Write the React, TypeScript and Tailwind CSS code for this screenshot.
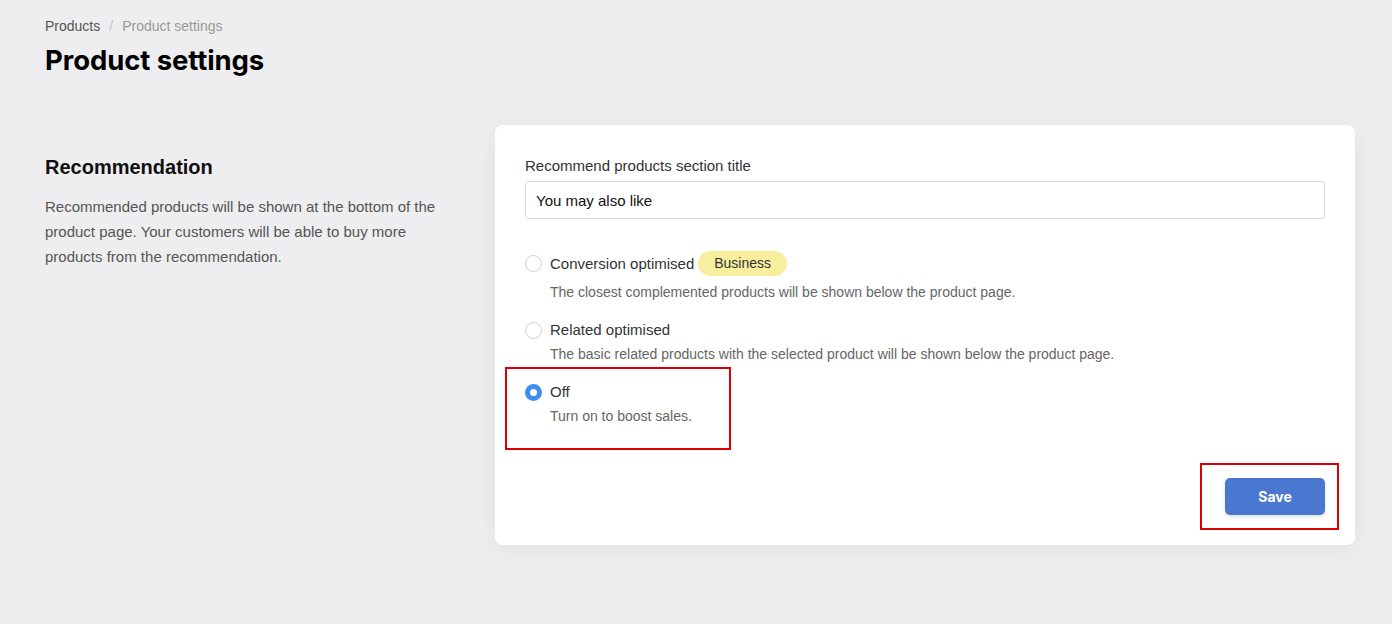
import React, { useState } from "react";

const options = [
  {
    id: "conversion",
    label: "Conversion optimised",
    badge: "Business",
    desc: "The closest complemented products will be shown below the product page.",
  },
  {
    id: "related",
    label: "Related optimised",
    desc: "The basic related products with the selected product will be shown below the product page.",
  },
  {
    id: "off",
    label: "Off",
    desc: "Turn on to boost sales.",
  },
];

export default function App() {
  const [selected, setSelected] = useState("off");

  return (
    <div className="min-h-screen bg-[#eeeef0] px-[45px] pt-[17px] pb-10 font-['Liberation_Sans',Arial,sans-serif]">
      {/* Header */}
      <nav className="flex items-center text-[14px] leading-[18px] text-[#999]">
        <span className="text-[#555]">Products</span>
        <span className="mx-[9px] text-[#c4c4c4]">/</span>
        <span>Product settings</span>
      </nav>
      <h1 className="mt-[8px] text-[27.5px] leading-[34px] font-bold text-black font-['Inter',sans-serif] tracking-[-0.1px]">
        Product settings
      </h1>

      <div className="mt-[48px] flex">
        {/* 설명 */}
        <section className="w-[450px] shrink-0 pt-[29px]">
          <h2 className="text-[20px] leading-[26px] font-bold text-[#111]">Recommendation</h2>
          <p className="mt-[14px] w-[405px] text-[15px] leading-[25px] text-[#555]">
            Recommended products will be shown at the bottom of the product page. Your customers will be able to buy more
            products from the recommendation.
          </p>
        </section>

        {/* Card */}
        <section className="relative w-[860px] shrink-0 rounded-[8px] bg-white px-[30px] pt-[31px] pb-[30px] shadow-[0_4px_24px_rgba(0,0,0,0.06)]">
          <label className="block text-[15px] leading-[20px] text-[#333]">Recommend products section title</label>
          <input
            className="mt-[5px] block h-[38px] w-full rounded-[3px] border border-[#dcdcdc] px-[10px] text-[15px] text-[#111] outline-none"
            defaultValue="You may also like"
          />

          <div className="mt-[29px] flex flex-col gap-[19px]">
            {options.map((o) => {
              const on = selected === o.id;
              return (
                <div key={o.id} className="cursor-pointer" onClick={() => setSelected(o.id)}>
                  <div className="flex min-h-[20px] items-center">
                    <span
                      className={
                        on
                          ? "box-border h-[17px] w-[17px] rounded-full border-[5px] border-[#3d8ef0] bg-white"
                          : "box-border h-[17px] w-[17px] rounded-full border border-[#cfcfcf] bg-white"
                      }
                    />
                    <span className="ml-[8px] text-[15px] leading-[20px] text-[#333]">{o.label}</span>
                    {o.badge && (
                      <span className="my-[3px] ml-[4px] flex h-[25px] items-center rounded-full bg-[#f8ef9e] px-[16px] text-[14px] text-[#333]">
                        {o.badge}
                      </span>
                    )}
                  </div>
                  <p className={o.badge ? "ml-[25px] mt-[4px] text-[14px] leading-[18px] text-[#666]" : "ml-[25px] mt-[5px] text-[14px] leading-[18px] text-[#666]"}>
                    {o.desc}
                  </p>
                </div>
              );
            })}
          </div>

          <div className="mt-[53px] flex justify-end">
            <button className="h-[37px] w-[100px] rounded-[5px] bg-[#4a78d1] text-[14px] font-bold text-white font-['Inter',sans-serif] shadow-[0_2px_4px_rgba(0,0,0,0.12)]">
              Save
            </button>
          </div>

          {/* annotation boxes */}
          <div className="pointer-events-none absolute left-[10px] top-[242px] h-[83px] w-[226px] border-2 border-[#dd0000]" />
          <div className="pointer-events-none absolute left-[705px] top-[338px] h-[67px] w-[139px] border-2 border-[#dd0000]" />
        </section>
      </div>
    </div>
  );
}
